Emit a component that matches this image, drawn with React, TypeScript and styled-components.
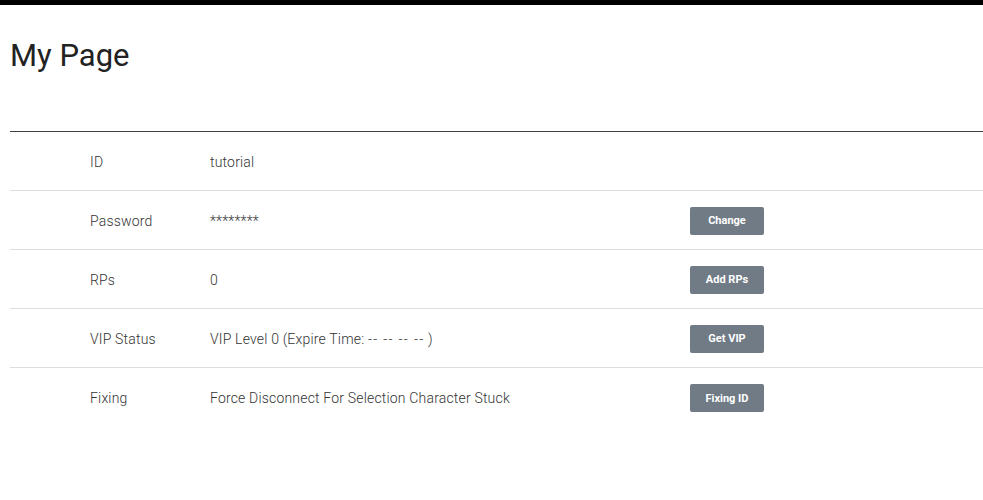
import styled, { createGlobalStyle } from "styled-components";

const GlobalStyle = createGlobalStyle`
  html, body {
    margin: 0;
    padding: 0;
    background: #fff;
    font-family: Roboto, "Liberation Sans", sans-serif;
    color: #333;
  }
`;

const TopBar = styled.div`
  height: 5px;
  background-color: #000;
`;

const PageContainer = styled.div`
  padding: 0 0 0 10px;
`;

const Title = styled.h1`
  margin: 0;
  padding-top: 31px;
  height: 95px;
  box-sizing: border-box;
  font-size: 31px;
  font-weight: 400;
  color: #222;
  line-height: 40px;
`;

const InfoTable = styled.div`
  border-top: 1px solid #3d4247;
  margin-top: 31px;
`;

const Row = styled.div<{ last?: boolean }>`
  display: grid;
  grid-template-columns: 80px 120px 480px 74px;
  align-items: center;
  height: 59px;
  box-sizing: border-box;
  border-bottom: ${({ last }) => (last ? "none" : "1px solid #dedede")};
  font-size: 14px;
  font-weight: 300;
  letter-spacing: 0.18px;
  color: #333;
  padding-top: 1px;
`;

const Label = styled.div`
  grid-column: 2;
`;

const Value = styled.div`
  grid-column: 3;
  white-space: pre;
`;

const Dashes = styled.span`
  letter-spacing: 1.3px;
`;

const ActionButton = styled.button`
  grid-column: 4;
  width: 74px;
  height: 28px;
  background-color: #707b85;
  border: none;
  border-radius: 2px;
  color: #fff;
  font-family: Roboto, "Liberation Sans", sans-serif;
  font-size: 11px;
  font-weight: 700;
  cursor: pointer;
  padding: 0;
`;

const rows = [
  { label: "ID", value: "tutorial" },
  { label: "Password", value: "********", action: "Change" },
  { label: "RPs", value: "0", action: "Add RPs" },
  {
    label: "VIP Status",
    value: (
      <>
        VIP Level 0 (Expire Time: <Dashes>-- -- -- --</Dashes> )
      </>
    ),
    action: "Get VIP",
  },
  { label: "Fixing", value: "Force Disconnect For Selection Character Stuck", action: "Fixing ID" },
];

const App = () => {
  return (
    <>
      <GlobalStyle />
      <TopBar />
      <PageContainer>
        <Title>My Page</Title>
        <InfoTable>
          {rows.map((row, i) => (
            <Row key={row.label} last={i === rows.length - 1}>
              <Label>{row.label}</Label>
              <Value>{row.value}</Value>
              {row.action && <ActionButton>{row.action}</ActionButton>}
            </Row>
          ))}
        </InfoTable>
      </PageContainer>
    </>
  );
};

export default App;
